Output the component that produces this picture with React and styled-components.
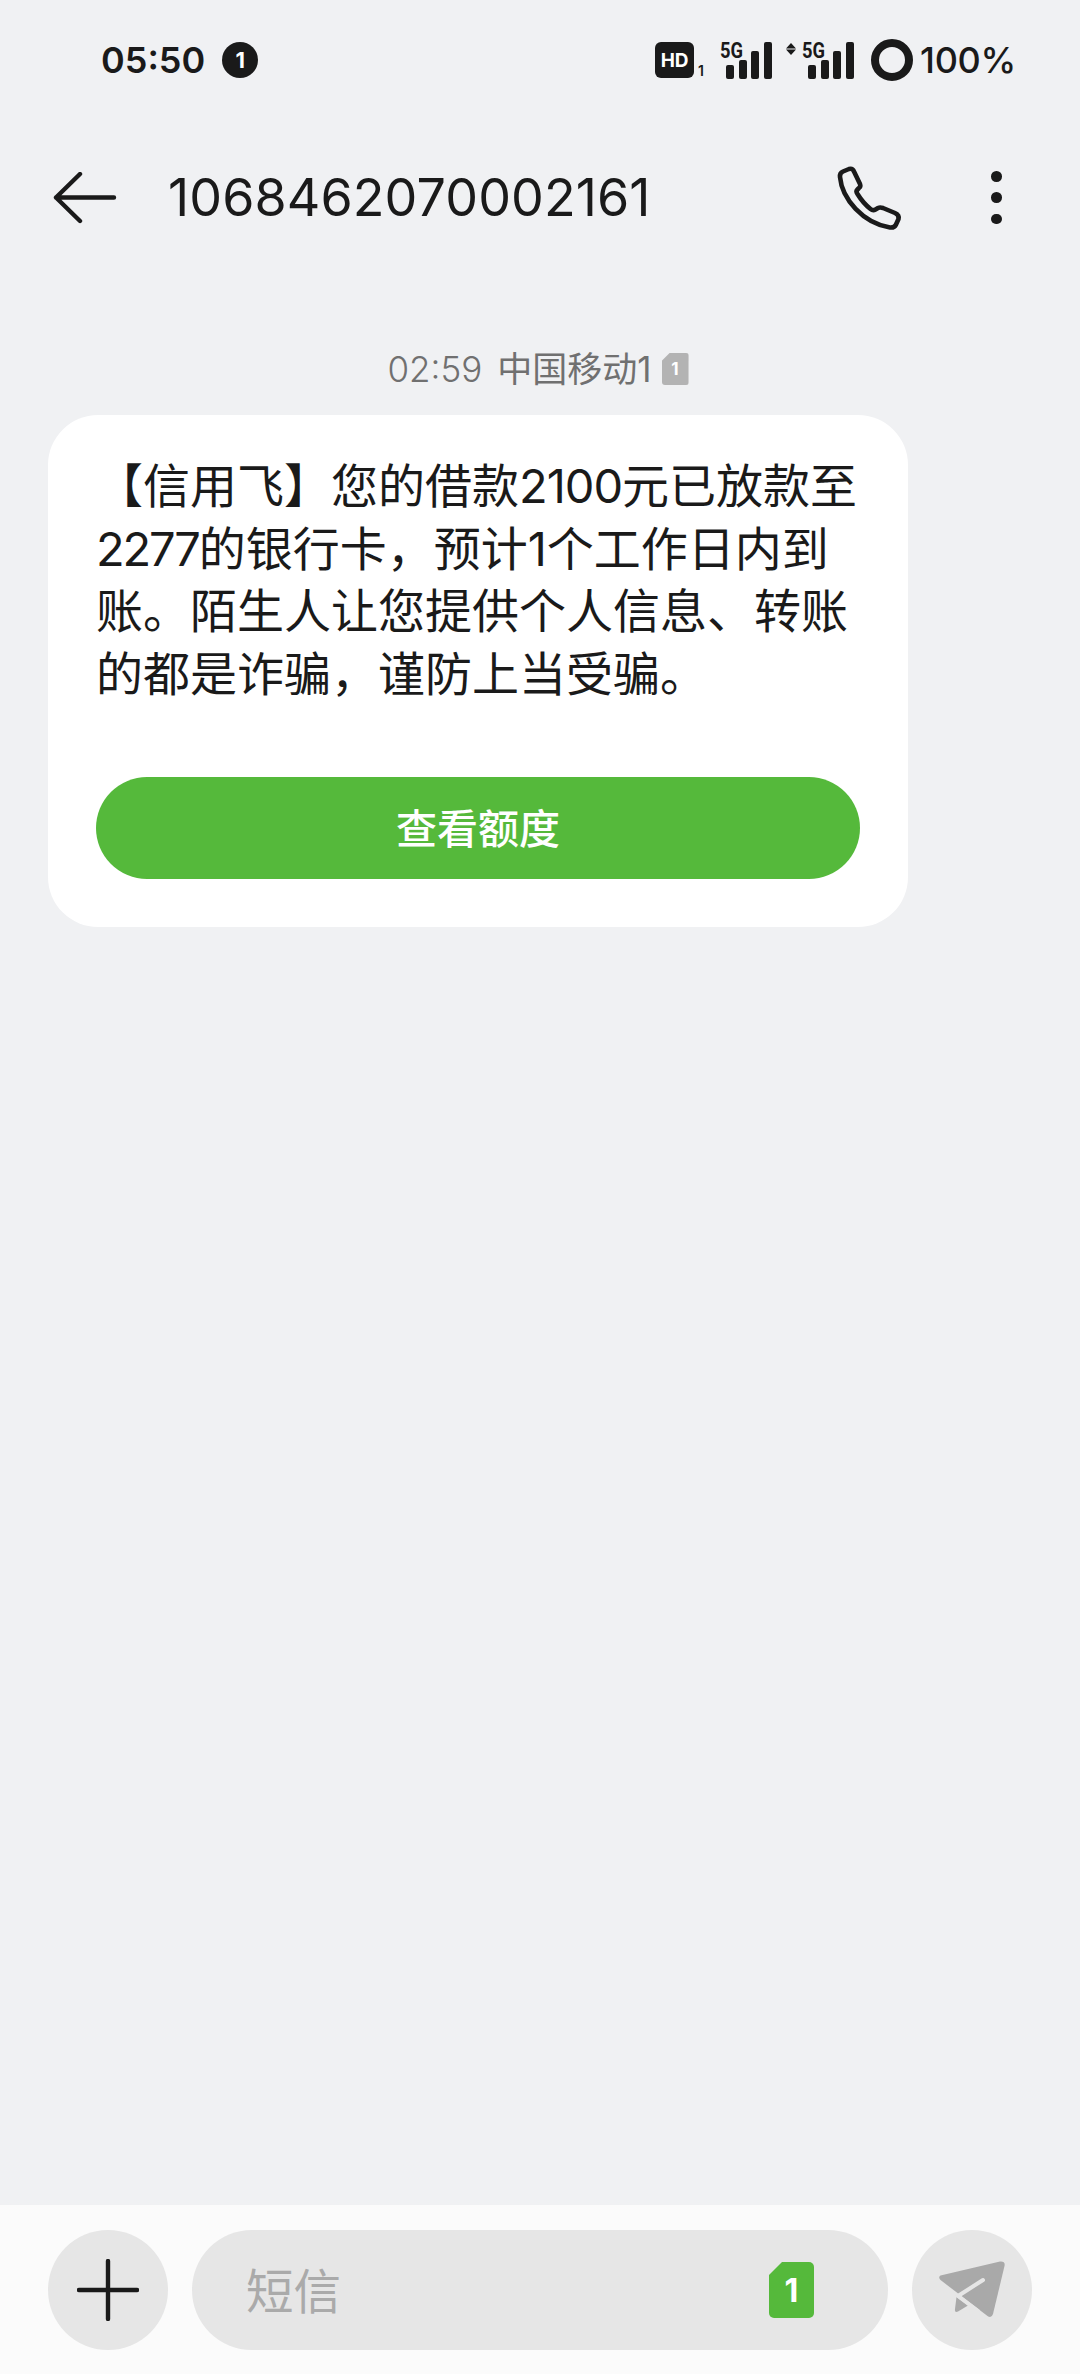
import React from "react";
import styled, { createGlobalStyle } from "styled-components";

const GlobalStyle = createGlobalStyle`
  html, body {
    margin: 0;
    padding: 0;
    background: #f0f1f3;
  }
  * {
    box-sizing: border-box;
  }
`;

const FONT = `Inter, "Noto Sans CJK SC", sans-serif`;

const Signal = ({ arrows }) => (
  <SignalSvg viewBox={arrows ? "0 -8 68 46" : "0 -8 52 46"} $wide={arrows}>
    <g transform={arrows ? "translate(16 0)" : undefined}>
      <text x="0" y="15.5" fontFamily="Roboto, sans-serif" fontWeight="700" fontSize="22" textLength="23" lengthAdjust="spacingAndGlyphs" fill="#1a1a1a">5G</text>
      <rect x="6" y="23" width="8" height="14" rx="2" fill="#1a1a1a" />
      <rect x="19" y="18" width="8" height="19" rx="2" fill="#1a1a1a" />
      <rect x="31" y="9" width="8" height="28" rx="2" fill="#1a1a1a" />
      <rect x="44" y="0" width="8" height="37" rx="2" fill="#1a1a1a" />
    </g>
    {arrows && <path d="M5 1 L10 6.5 H0 Z M5 13 L10 7.5 H0 Z" fill="#1a1a1a" />}
  </SignalSvg>
);

const App = () => {
  return (
    <Page>
      <GlobalStyle />
      <StatusBar>
        <StatusLeft>
          <Time>05:50</Time>
          <NoticeDot>1</NoticeDot>
        </StatusLeft>
        <StatusRight>
          <HdGroup>
            <HdBadge>HD</HdBadge>
            <HdSub>1</HdSub>
          </HdGroup>
          <Signal />
          <Signal arrows />
          <BatteryRing />
          <BatteryText>100%</BatteryText>
        </StatusRight>
      </StatusBar>

      <Header>
        <BackIcon viewBox="0 0 66 52" fill="none">
          <path d="M4 25.5 H62 M28 2 L4 25.5 L28 49" stroke="#1a1a1a" strokeWidth="4.4" strokeLinecap="round" strokeLinejoin="round" />
        </BackIcon>
        <Title>1068462070002161</Title>
        <PhoneIcon viewBox="0 0 70 70" fill="none">
          <path
            d="M8 8.5 L14 6 Q17.5 5 19 8.5 L25 21 Q26 23.5 24 25 L22.5 26.5 Q20.5 28.5 22.5 31 Q28 40 35.5 46 Q38 48 40.5 46.5 L43 45 Q45 44 48 45 L60 50 Q64.5 52 63.5 56 L61 61.5 Q59.5 65 55 64.5 C28 60 7 36 5 14 Q4.5 10 8 8.5 Z"
            stroke="#1a1a1a"
            strokeWidth="4.6"
            strokeLinejoin="round"
          />
        </PhoneIcon>
        <Kebab>
          <i />
          <i />
          <i />
        </Kebab>
      </Header>

      <Thread>
        <Meta>
          <MetaTime>02:59</MetaTime>
          <Carrier>中国移动1</Carrier>
          <SimSmall $fill="#b3b3b3" $w={27} $h={32} $font={17} $cut={8}>1</SimSmall>
        </Meta>
        <Bubble>
          <MessageText>
            【信用飞】您的借款<Digits $ls={-1}>2100</Digits>元已放款至<Digits $ls={-2.2}>2277</Digits>的银行卡，预计1个工作日内到账。陌生人让您提供个人信息、转账的都是诈骗，谨防上当受骗。
          </MessageText>
          <ActionButton>查看额度</ActionButton>
        </Bubble>
      </Thread>

      <Composer>
        <RoundButton>
          <svg width="62" height="62" viewBox="0 0 62 62" fill="none">
            <path d="M31 2 V60 M2 31 H60" stroke="#1a1a1a" strokeWidth="4.4" strokeLinecap="round" />
          </svg>
        </RoundButton>
        <InputPill>
          <Placeholder>短信</Placeholder>
          <SimSmall $fill="#55b93b" $w={45} $h={56} $font={32} $cut={13}>1</SimSmall>
        </InputPill>
        <RoundButton>
          <svg width="68" height="58" viewBox="0 0 68 58" fill="none">
            <path d="M2.5 14.5 L62 0.5 Q67.5 0 66.5 5 L55 53 Q53.5 57.5 49.5 55 L2.5 19 Q0 16 2.5 14.5 Z" fill="#a9a9a9" />
            <path d="M18.5 36 L30 44.5 L20 50.5 Q16.5 52 17 48 Z" fill="#a9a9a9" />
            <path d="M45 19 L20 35 L40 50" stroke="#e6e6e6" strokeWidth="4" strokeLinecap="round" strokeLinejoin="round" />
          </svg>
        </RoundButton>
      </Composer>
    </Page>
  );
};

export default App;

const Page = styled.div`
  width: 1080px;
  height: 2374px;
  display: flex;
  flex-direction: column;
  background: #f0f1f3;
  color: #1a1a1a;
  font-family: ${FONT};
  overflow: hidden;
`;

const StatusBar = styled.div`
  height: 118px;
  display: flex;
  justify-content: space-between;
  align-items: flex-start;
  padding: 39px 64px 0 101px;
`;

const StatusLeft = styled.div`
  height: 42px;
  display: flex;
  align-items: center;
  gap: 17px;
`;

const Time = styled.span`
  font-size: 36px;
  font-weight: 600;
  line-height: 42px;
`;

const NoticeDot = styled.span`
  width: 36px;
  height: 36px;
  border-radius: 50%;
  background: #1a1a1a;
  color: #fff;
  font-size: 22px;
  font-weight: 700;
  display: flex;
  align-items: center;
  justify-content: center;
`;

const StatusRight = styled.div`
  height: 42px;
  display: flex;
  align-items: center;
`;

const HdGroup = styled.div`
  display: flex;
  align-items: flex-end;
  gap: 4px;
  margin-right: 16px;
  height: 36px;
`;

const HdBadge = styled.span`
  width: 39px;
  height: 36px;
  border-radius: 6px;
  background: #1a1a1a;
  color: #fff;
  font-size: 19px;
  font-weight: 700;
  display: flex;
  align-items: center;
  justify-content: center;
`;

const HdSub = styled.span`
  font-size: 14px;
  font-weight: 600;
  line-height: 14px;
`;

const SignalSvg = styled.svg`
  width: ${p => (p.$wide ? "68px" : "52px")};
  height: 46px;
  margin-right: ${p => (p.$wide ? "17px" : "14px")};
  margin-top: -7px;
`;

const BatteryRing = styled.span`
  width: 42px;
  height: 42px;
  border-radius: 50%;
  border: 8px solid #1a1a1a;
`;

const BatteryText = styled.span`
  margin-left: 7px;
  font-size: 36px;
  font-weight: 500;
  line-height: 42px;
  letter-spacing: -0.3px;
`;

const Header = styled.div`
  height: 160px;
  display: flex;
  align-items: flex-start;
  padding: 54px 0 0 52px;
`;

const BackIcon = styled.svg`
  width: 66px;
  height: 52px;
  flex: none;
`;

const Title = styled.h1`
  margin: -5px 0 0 50px;
  width: 508px;
  font-size: 52px;
  font-weight: 400;
  line-height: 62px;
  letter-spacing: 0.1px;
  white-space: nowrap;
`;

const PhoneIcon = styled.svg`
  width: 70px;
  height: 70px;
  flex: none;
  margin: -9px 0 0 159px;
`;

const Kebab = styled.div`
  display: flex;
  flex-direction: column;
  gap: 10.7px;
  margin: -1px 0 0 86px;

  i {
    display: block;
    width: 10.6px;
    height: 10.6px;
    border-radius: 50%;
    background: #1a1a1a;
  }
`;

const Thread = styled.div`
  flex: 1;
  padding: 68px 0 0 48px;
`;

const Meta = styled.div`
  width: 980px;
  height: 46px;
  display: flex;
  align-items: center;
  justify-content: center;
  gap: 5px;
  font-size: 35px;
  line-height: 46px;
  color: #707070;
  margin-bottom: 23px;
`;

const MetaTime = styled.span`
  font-weight: 300;
`;

const Carrier = styled.span`
  margin: 0 5px 0 10px;
`;

const SimSmall = styled.span`
  width: ${p => p.$w}px;
  height: ${p => p.$h}px;
  background: ${p => p.$fill};
  color: #fff;
  font-size: ${p => p.$font}px;
  font-weight: 700;
  border-radius: ${p => Math.round(p.$w / 9)}px;
  clip-path: polygon(${p => p.$cut}px 0, 100% 0, 100% 100%, 0 100%, 0 ${p => p.$cut}px);
  display: flex;
  align-items: center;
  justify-content: center;
  flex: none;
`;

const Bubble = styled.div`
  width: 860px;
  height: 512px;
  padding: 40px 48px 48px;
  background: #fff;
  border-radius: 50px;
  display: flex;
  flex-direction: column;
`;

const MessageText = styled.p`
  margin: 0;
  flex: 1;
  font-size: 47px;
  line-height: 62.6px;
  color: #1a1a1a;
`;

const Digits = styled.span`
  letter-spacing: ${p => p.$ls}px;
`;

const ActionButton = styled.button`
  width: 100%;
  height: 102px;
  padding: 0 0 4px;
  border: 0;
  border-radius: 51px;
  background: #55b93b;
  color: #fff;
  font-family: ${FONT};
  font-size: 41px;
  font-weight: 500;
`;

const Composer = styled.div`
  height: 169px;
  display: flex;
  gap: 24px;
  padding: 25px 48px 0;
  background: #fbfbfb;
`;

const RoundButton = styled.div`
  width: 120px;
  height: 120px;
  border-radius: 50%;
  background: #e6e6e6;
  display: flex;
  align-items: center;
  justify-content: center;
  flex: none;
`;

const InputPill = styled.div`
  flex: 1;
  height: 120px;
  border-radius: 60px;
  background: #e6e6e6;
  display: flex;
  align-items: center;
  justify-content: space-between;
  padding: 0 74px 0 54px;
`;

const Placeholder = styled.span`
  font-size: 47.5px;
  margin-top: -3px;
  color: #aaaaaa;
`;
